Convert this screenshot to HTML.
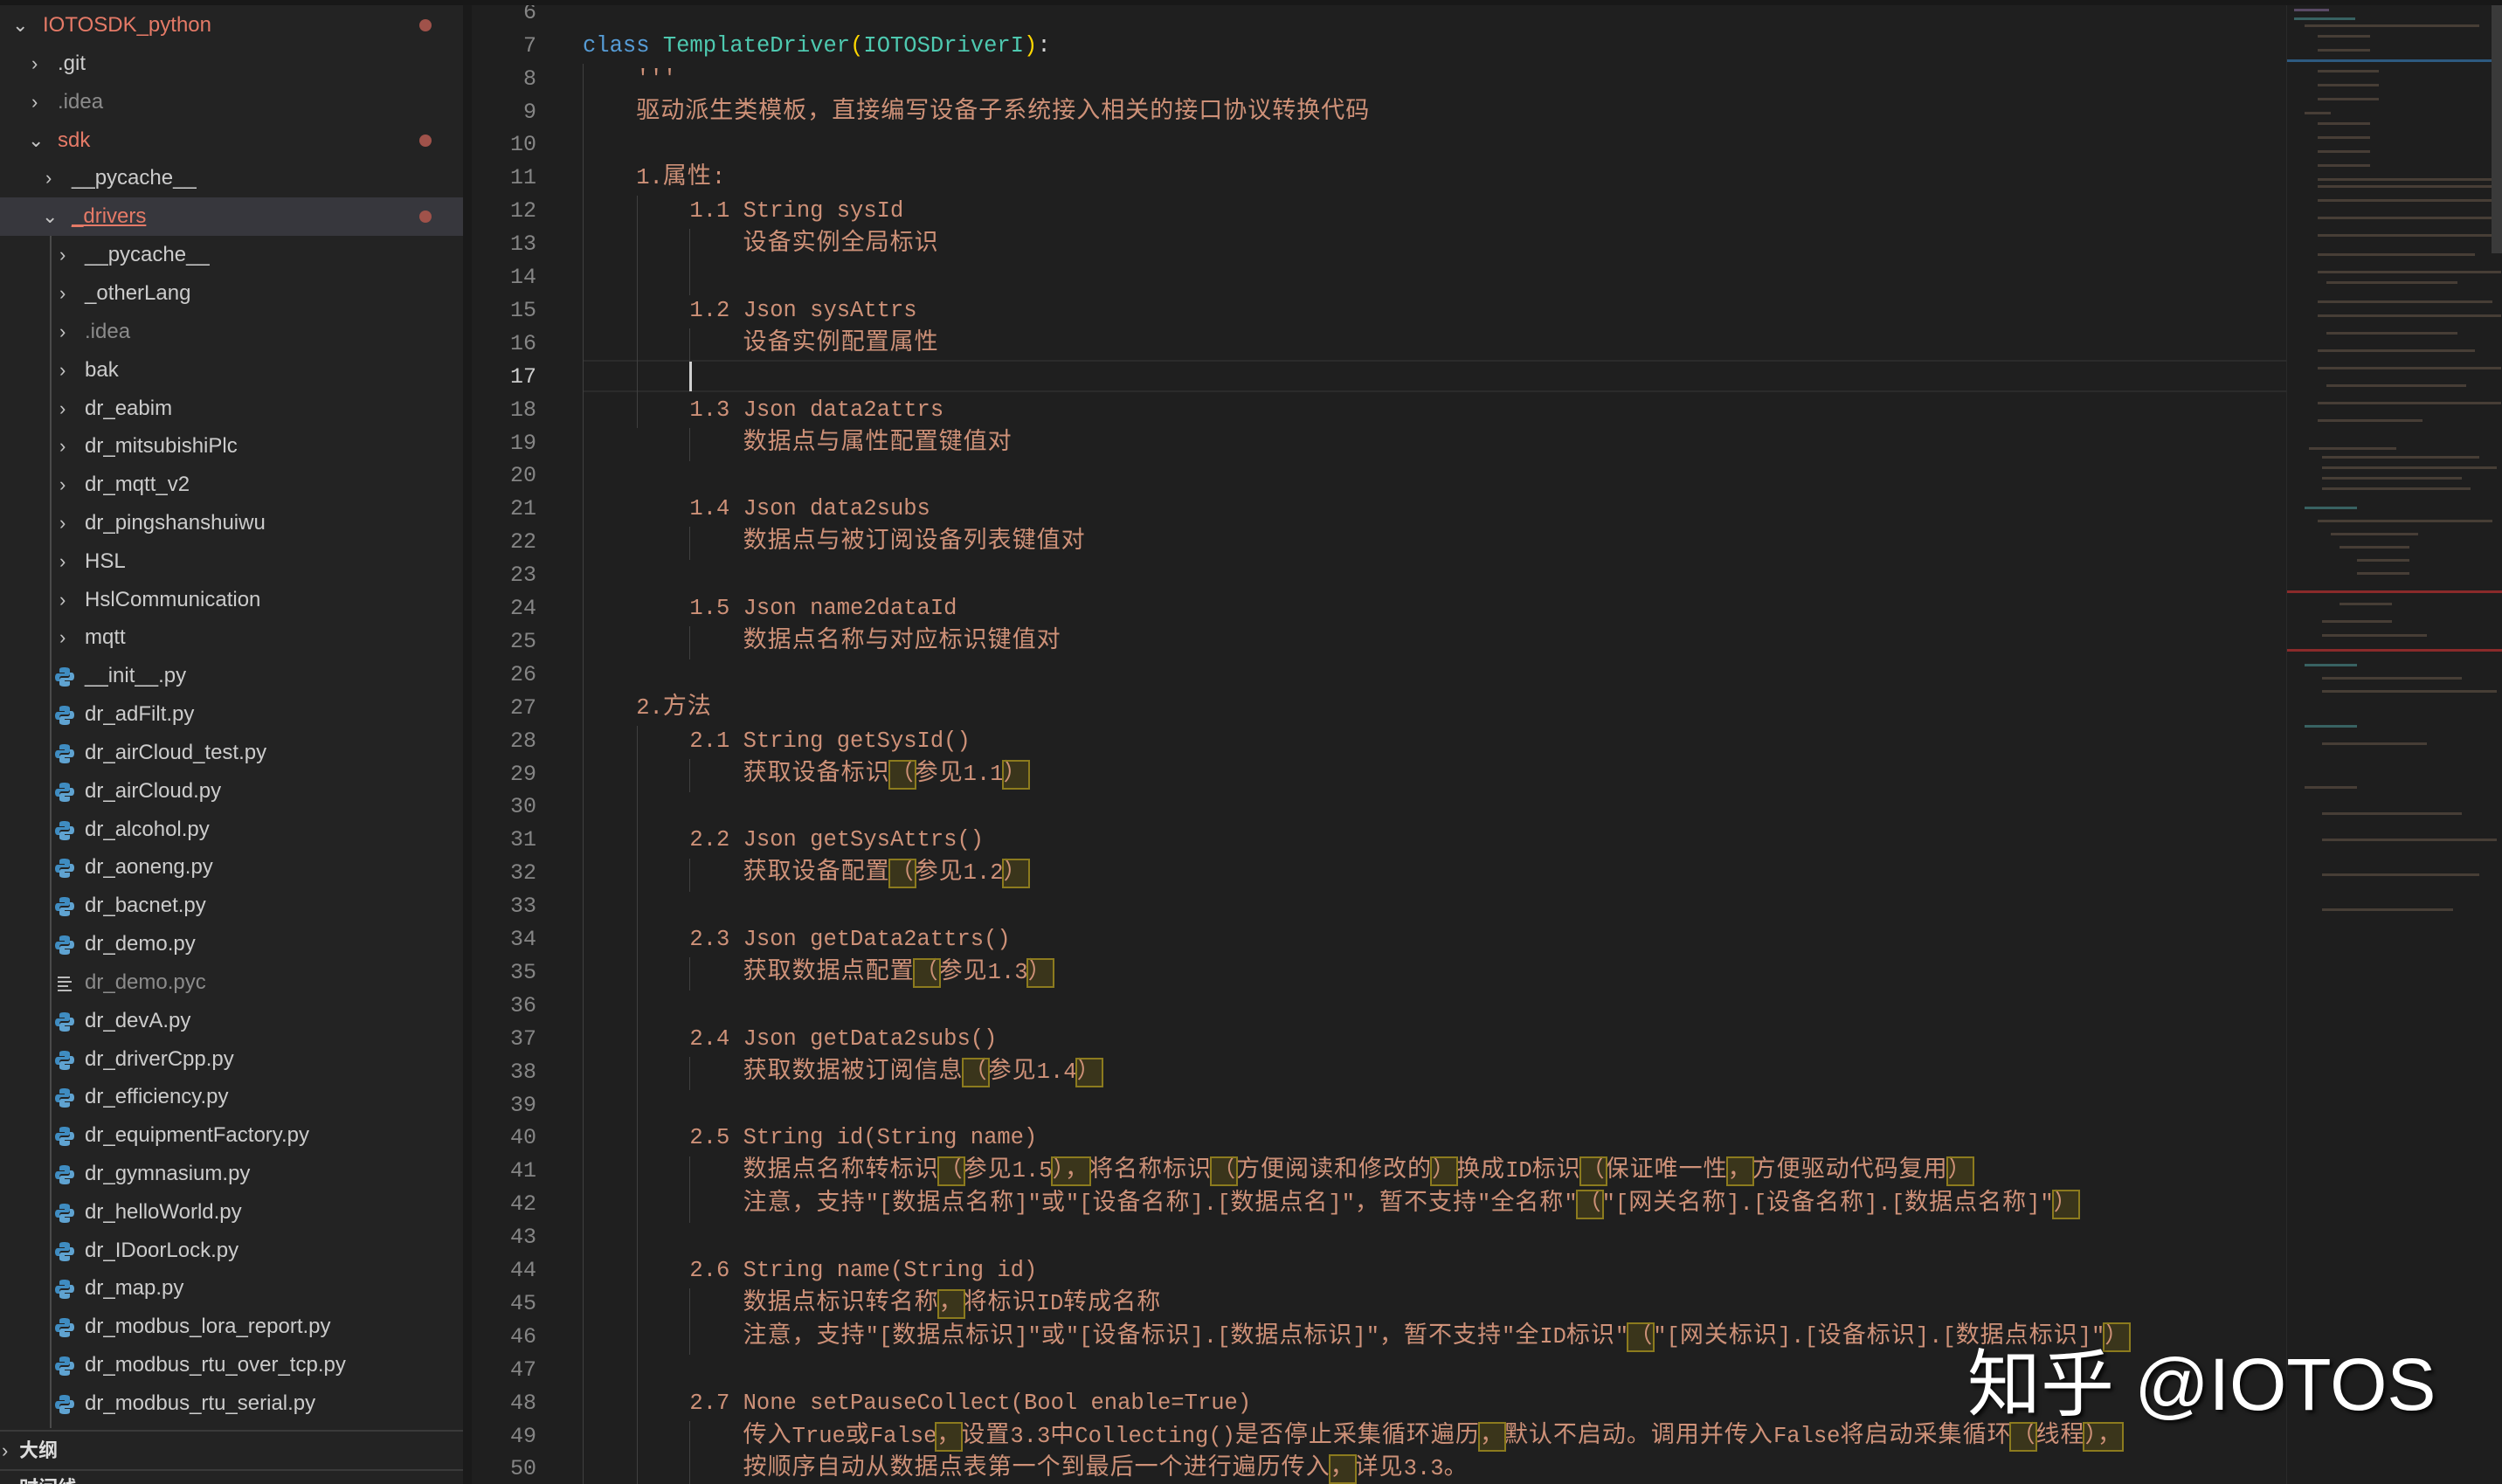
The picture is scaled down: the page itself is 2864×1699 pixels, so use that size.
<!DOCTYPE html>
<html><head><meta charset="utf-8">
<style>
*{margin:0;padding:0;box-sizing:border-box}
html,body{width:2864px;height:1699px;overflow:hidden;background:#1f1f1f}
body{position:relative;font-family:"Liberation Sans","Noto Sans CJK SC",sans-serif}
#side{position:absolute;left:0;top:0;width:530px;height:1699px;background:#232323}
.r{position:absolute;left:0;width:530px;height:44px;line-height:44px;font-size:24px;color:#cccccc;white-space:nowrap}
.r .c{position:absolute;top:0;font-size:22px;color:#c5c5c5}
.r .t{position:absolute;top:0}
.red{color:#e57a67!important}
.dim{color:#8b8b8b!important}
.dot{position:absolute;left:480px;top:15px;width:14px;height:14px;border-radius:7px;background:#a0524a}
.sel{background:#37373d}
.ic{position:absolute;left:62px;top:11px}
#ed{position:absolute;left:530px;top:0;width:2087px;height:1699px;background:#1f1f1f;overflow:hidden}
.ln{position:absolute;left:0;width:84px;text-align:right;height:38px;line-height:38px;font-family:"Liberation Mono",monospace;font-size:25px;color:#858585}
.cl{position:absolute;left:137px;height:38px;line-height:38px;font-family:"Liberation Mono","Noto Sans CJK SC",monospace;font-size:25.5px;color:#ce9178;white-space:pre}
.cl i{font-style:normal;font-size:27px;letter-spacing:1px}
.g{position:absolute;width:1px;background:#404040}
.b{outline:2px solid #8c7b1e;background:rgba(110,95,20,.35)}
.kw{color:#569cd6}.ty{color:#4ec9b0}.br{color:#ffd700}.wh{color:#d4d4d4}
#mm{position:absolute;left:2617px;top:0;width:247px;height:1699px;background:#1e1e1e;border-left:1px solid #2a2a2a;overflow:hidden}
.m{position:absolute;height:3px;background:#6a5a4a;opacity:.55}
#wm{position:absolute;left:2252px;top:1518px;font-size:84px;color:#fff;font-family:"Liberation Sans","Noto Sans CJK SC",sans-serif;text-shadow:3px 3px 4px rgba(0,0,0,.8);white-space:nowrap}
</style></head><body>
<div style="position:absolute;left:0;top:0;width:2864px;height:6px;background:#181818;z-index:5"></div>
<div id="side">
<svg width="0" height="0" style="position:absolute"><defs><g id="py"><path d="M11 1c-5 0-5 2-5 3v3h6v1H4C2 8 1 10 1 12.5S2 17 4 17h2v-3c0-2 1-3 3-3h6c2 0 3-1 3-3V4c0-2-2-3-7-3z" fill="#3f8cc1"/><path d="M13 23c5 0 5-2 5-3v-3h-6v-1h8c2 0 3-2 3-4.5S22 7 20 7h-2v3c0 2-1 3-3 3H9c-2 0-3 1-3 3v4c0 2 2 3 7 3z" fill="#5fa3d1"/></g></defs></svg>
<div class="r" style="top:7px"><span class="c" style="left:14px">⌄</span><span class="t red" style="left:49px">IOTOSDK_python</span><span class="dot"></span></div>
<div class="r" style="top:51px"><span class="c" style="left:36px">›</span><span class="t" style="left:66px">.git</span></div>
<div class="r" style="top:95px"><span class="c" style="left:36px">›</span><span class="t dim" style="left:66px">.idea</span></div>
<div class="r" style="top:139px"><span class="c" style="left:32px">⌄</span><span class="t red" style="left:66px">sdk</span><span class="dot"></span></div>
<div class="r" style="top:182px"><span class="c" style="left:52px">›</span><span class="t" style="left:82px">__pycache__</span></div>
<div class="r sel" style="top:226px"><span class="c" style="left:48px">⌄</span><span class="t red" style="left:82px;text-decoration:underline">_drivers</span><span class="dot"></span></div>
<div style="position:absolute;left:57px;top:270px;width:2px;height:1365px;background:#4a4a4a"></div>
<div class="r" style="top:270px"><span class="c" style="left:68px">›</span><span class="t" style="left:97px">__pycache__</span></div>
<div class="r" style="top:314px"><span class="c" style="left:68px">›</span><span class="t" style="left:97px">_otherLang</span></div>
<div class="r" style="top:358px"><span class="c" style="left:68px">›</span><span class="t dim" style="left:97px">.idea</span></div>
<div class="r" style="top:402px"><span class="c" style="left:68px">›</span><span class="t" style="left:97px">bak</span></div>
<div class="r" style="top:446px"><span class="c" style="left:68px">›</span><span class="t" style="left:97px">dr_eabim</span></div>
<div class="r" style="top:489px"><span class="c" style="left:68px">›</span><span class="t" style="left:97px">dr_mitsubishiPlc</span></div>
<div class="r" style="top:533px"><span class="c" style="left:68px">›</span><span class="t" style="left:97px">dr_mqtt_v2</span></div>
<div class="r" style="top:577px"><span class="c" style="left:68px">›</span><span class="t" style="left:97px">dr_pingshanshuiwu</span></div>
<div class="r" style="top:621px"><span class="c" style="left:68px">›</span><span class="t" style="left:97px">HSL</span></div>
<div class="r" style="top:665px"><span class="c" style="left:68px">›</span><span class="t" style="left:97px">HslCommunication</span></div>
<div class="r" style="top:708px"><span class="c" style="left:68px">›</span><span class="t" style="left:97px">mqtt</span></div>
<div class="r" style="top:752px"><svg class="ic" width="24" height="24"><use href="#py"/></svg><span class="t" style="left:97px">__init__.py</span></div>
<div class="r" style="top:796px"><svg class="ic" width="24" height="24"><use href="#py"/></svg><span class="t" style="left:97px">dr_adFilt.py</span></div>
<div class="r" style="top:840px"><svg class="ic" width="24" height="24"><use href="#py"/></svg><span class="t" style="left:97px">dr_airCloud_test.py</span></div>
<div class="r" style="top:884px"><svg class="ic" width="24" height="24"><use href="#py"/></svg><span class="t" style="left:97px">dr_airCloud.py</span></div>
<div class="r" style="top:928px"><svg class="ic" width="24" height="24"><use href="#py"/></svg><span class="t" style="left:97px">dr_alcohol.py</span></div>
<div class="r" style="top:971px"><svg class="ic" width="24" height="24"><use href="#py"/></svg><span class="t" style="left:97px">dr_aoneng.py</span></div>
<div class="r" style="top:1015px"><svg class="ic" width="24" height="24"><use href="#py"/></svg><span class="t" style="left:97px">dr_bacnet.py</span></div>
<div class="r" style="top:1059px"><svg class="ic" width="24" height="24"><use href="#py"/></svg><span class="t" style="left:97px">dr_demo.py</span></div>
<div class="r" style="top:1103px"><svg class="ic" width="24" height="24"><path d="M4 5h14M4 10h16M4 15h12M4 20h16" stroke="#bbb" stroke-width="2"/></svg><span class="t dim" style="left:97px">dr_demo.pyc</span></div>
<div class="r" style="top:1147px"><svg class="ic" width="24" height="24"><use href="#py"/></svg><span class="t" style="left:97px">dr_devA.py</span></div>
<div class="r" style="top:1191px"><svg class="ic" width="24" height="24"><use href="#py"/></svg><span class="t" style="left:97px">dr_driverCpp.py</span></div>
<div class="r" style="top:1234px"><svg class="ic" width="24" height="24"><use href="#py"/></svg><span class="t" style="left:97px">dr_efficiency.py</span></div>
<div class="r" style="top:1278px"><svg class="ic" width="24" height="24"><use href="#py"/></svg><span class="t" style="left:97px">dr_equipmentFactory.py</span></div>
<div class="r" style="top:1322px"><svg class="ic" width="24" height="24"><use href="#py"/></svg><span class="t" style="left:97px">dr_gymnasium.py</span></div>
<div class="r" style="top:1366px"><svg class="ic" width="24" height="24"><use href="#py"/></svg><span class="t" style="left:97px">dr_helloWorld.py</span></div>
<div class="r" style="top:1410px"><svg class="ic" width="24" height="24"><use href="#py"/></svg><span class="t" style="left:97px">dr_IDoorLock.py</span></div>
<div class="r" style="top:1453px"><svg class="ic" width="24" height="24"><use href="#py"/></svg><span class="t" style="left:97px">dr_map.py</span></div>
<div class="r" style="top:1497px"><svg class="ic" width="24" height="24"><use href="#py"/></svg><span class="t" style="left:97px">dr_modbus_lora_report.py</span></div>
<div class="r" style="top:1541px"><svg class="ic" width="24" height="24"><use href="#py"/></svg><span class="t" style="left:97px">dr_modbus_rtu_over_tcp.py</span></div>
<div class="r" style="top:1585px"><svg class="ic" width="24" height="24"><use href="#py"/></svg><span class="t" style="left:97px">dr_modbus_rtu_serial.py</span></div>
<div style="position:absolute;left:0;top:1637px;width:530px;height:2px;background:#3a3a3a"></div>
<div class="r" style="top:1641px;height:40px;line-height:40px"><span class="c" style="left:2px">›</span><span class="t" style="left:22px;font-weight:bold;font-size:22px;color:#ddd">大纲</span></div>
<div style="position:absolute;left:0;top:1682px;width:530px;height:2px;background:#3a3a3a"></div>
<div class="r" style="top:1684px;height:40px;line-height:40px"><span class="c" style="left:2px">›</span><span class="t" style="left:22px;font-weight:bold;font-size:22px;color:#ddd">时间线</span></div>
</div>

<div id="ed">
<div style="position:absolute;left:0;top:0;width:10px;height:1699px;background:#1a1a1a"></div>
<div style="position:absolute;left:137px;top:412px;width:1950px;height:37px;border-top:2px solid #2b2b2b;border-bottom:2px solid #2b2b2b"></div>
<div class="g" style="left:137px;top:73px;height:1630px"></div>
<div class="g" style="left:199px;top:224px;height:266px"></div>
<div class="g" style="left:199px;top:831px;height:870px"></div>
<div class="g" style="left:259px;top:262px;height:76px"></div>
<div class="g" style="left:259px;top:376px;height:38px"></div>
<div class="g" style="left:259px;top:490px;height:38px"></div>
<div class="g" style="left:259px;top:603px;height:38px"></div>
<div class="g" style="left:259px;top:717px;height:38px"></div>
<div class="g" style="left:259px;top:869px;height:38px"></div>
<div class="g" style="left:259px;top:983px;height:38px"></div>
<div class="g" style="left:259px;top:1096px;height:38px"></div>
<div class="g" style="left:259px;top:1210px;height:38px"></div>
<div class="g" style="left:259px;top:1324px;height:76px"></div>
<div class="g" style="left:259px;top:1475px;height:76px"></div>
<div class="g" style="left:259px;top:1627px;height:76px"></div>
<div style="position:absolute;left:259px;top:414px;width:3px;height:34px;background:#d0d0d0"></div>

<div class="ln" style="top:-4px">6</div>
<div class="ln" style="top:34px">7</div>
<div class="ln" style="top:72px">8</div>
<div class="ln" style="top:110px">9</div>
<div class="ln" style="top:147px">10</div>
<div class="ln" style="top:185px">11</div>
<div class="ln" style="top:223px">12</div>
<div class="ln" style="top:261px">13</div>
<div class="ln" style="top:299px">14</div>
<div class="ln" style="top:337px">15</div>
<div class="ln" style="top:375px">16</div>
<div class="ln" style="top:413px;color:#cccccc">17</div>
<div class="ln" style="top:451px">18</div>
<div class="ln" style="top:489px">19</div>
<div class="ln" style="top:526px">20</div>
<div class="ln" style="top:564px">21</div>
<div class="ln" style="top:602px">22</div>
<div class="ln" style="top:640px">23</div>
<div class="ln" style="top:678px">24</div>
<div class="ln" style="top:716px">25</div>
<div class="ln" style="top:754px">26</div>
<div class="ln" style="top:792px">27</div>
<div class="ln" style="top:830px">28</div>
<div class="ln" style="top:868px">29</div>
<div class="ln" style="top:905px">30</div>
<div class="ln" style="top:943px">31</div>
<div class="ln" style="top:981px">32</div>
<div class="ln" style="top:1019px">33</div>
<div class="ln" style="top:1057px">34</div>
<div class="ln" style="top:1095px">35</div>
<div class="ln" style="top:1133px">36</div>
<div class="ln" style="top:1171px">37</div>
<div class="ln" style="top:1209px">38</div>
<div class="ln" style="top:1247px">39</div>
<div class="ln" style="top:1284px">40</div>
<div class="ln" style="top:1322px">41</div>
<div class="ln" style="top:1360px">42</div>
<div class="ln" style="top:1398px">43</div>
<div class="ln" style="top:1436px">44</div>
<div class="ln" style="top:1474px">45</div>
<div class="ln" style="top:1512px">46</div>
<div class="ln" style="top:1550px">47</div>
<div class="ln" style="top:1588px">48</div>
<div class="ln" style="top:1626px">49</div>
<div class="ln" style="top:1663px">50</div>

<div class="cl" style="top:34px"><span class="kw">class</span> <span class="ty">TemplateDriver</span><span class="br">(</span><span class="ty">IOTOSDriverI</span><span class="br">)</span><span class="wh">:</span></div>
<div class="cl" style="top:72px">    '''</div>
<div class="cl" style="top:110px">    <i>驱动派生类模板，直接编写设备子系统接入相关的接口协议转换代码</i></div>
<div class="cl" style="top:185px">    1.<i>属性</i>:</div>
<div class="cl" style="top:223px">        1.1 String sysId</div>
<div class="cl" style="top:261px">            <i>设备实例全局标识</i></div>
<div class="cl" style="top:337px">        1.2 Json sysAttrs</div>
<div class="cl" style="top:375px">            <i>设备实例配置属性</i></div>
<div class="cl" style="top:451px">        1.3 Json data2attrs</div>
<div class="cl" style="top:489px">            <i>数据点与属性配置键值对</i></div>
<div class="cl" style="top:564px">        1.4 Json data2subs</div>
<div class="cl" style="top:602px">            <i>数据点与被订阅设备列表键值对</i></div>
<div class="cl" style="top:678px">        1.5 Json name2dataId</div>
<div class="cl" style="top:716px">            <i>数据点名称与对应标识键值对</i></div>
<div class="cl" style="top:792px">    2.<i>方法</i></div>
<div class="cl" style="top:830px">        2.1 String getSysId()</div>
<div class="cl" style="top:868px">            <i>获取设备标识<span class="b">（</span>参见</i>1.1<i class="b">）</i></div>
<div class="cl" style="top:943px">        2.2 Json getSysAttrs()</div>
<div class="cl" style="top:981px">            <i>获取设备配置<span class="b">（</span>参见</i>1.2<i class="b">）</i></div>
<div class="cl" style="top:1057px">        2.3 Json getData2attrs()</div>
<div class="cl" style="top:1095px">            <i>获取数据点配置<span class="b">（</span>参见</i>1.3<i class="b">）</i></div>
<div class="cl" style="top:1171px">        2.4 Json getData2subs()</div>
<div class="cl" style="top:1209px">            <i>获取数据被订阅信息<span class="b">（</span>参见</i>1.4<i class="b">）</i></div>
<div class="cl" style="top:1284px">        2.5 String id(String name)</div>
<div class="cl" style="top:1322px">            <i>数据点名称转标识<span class="b">（</span>参见</i>1.5<i><span class="b">），</span>将名称标识<span class="b">（</span>方便阅读和修改的<span class="b">）</span>换成</i>ID<i>标识<span class="b">（</span>保证唯一性<span class="b">，</span>方便驱动代码复用<span class="b">）</span></i></div>
<div class="cl" style="top:1360px">            <i>注意，支持</i>"[<i>数据点名称</i>]"<i>或</i>"[<i>设备名称</i>].[<i>数据点名</i>]"<i>，暂不支持</i>"<i>全名称</i>"<i class="b">（</i>"[<i>网关名称</i>].[<i>设备名称</i>].[<i>数据点名称</i>]"<i class="b">）</i></div>
<div class="cl" style="top:1436px">        2.6 String name(String id)</div>
<div class="cl" style="top:1474px">            <i>数据点标识转名称<span class="b">，</span>将标识</i>ID<i>转成名称</i></div>
<div class="cl" style="top:1512px">            <i>注意，支持</i>"[<i>数据点标识</i>]"<i>或</i>"[<i>设备标识</i>].[<i>数据点标识</i>]"<i>，暂不支持</i>"<i>全</i>ID<i>标识</i>"<i class="b">（</i>"[<i>网关标识</i>].[<i>设备标识</i>].[<i>数据点标识</i>]"<i class="b">）</i></div>
<div class="cl" style="top:1588px">        2.7 None setPauseCollect(Bool enable=True)</div>
<div class="cl" style="top:1626px">            <i>传入</i>True<i>或</i>False<i><span class="b">，</span>设置</i>3.3<i>中</i>Collecting()<i>是否停止采集循环遍历<span class="b">，</span>默认不启动。调用并传入</i>False<i>将启动采集循环<span class="b">（</span>线程<span class="b">），</span></i></div>
<div class="cl" style="top:1663px">            <i>按顺序自动从数据点表第一个到最后一个进行遍历传入<span class="b">，</span>详见</i>3.3<i>。</i></div>
</div>

<div id="mm">
<div style="position:absolute;left:0;top:68px;width:247px;height:3px;background:#2d5a80"></div>
<div style="position:absolute;left:0;top:676px;width:247px;height:3px;background:#8a2a2a"></div>
<div style="position:absolute;left:0;top:743px;width:247px;height:3px;background:#8a2a2a"></div>
<div class="m" style="left:8px;top:10px;width:40px;background:#8a70a0"></div>
<div class="m" style="left:8px;top:20px;width:70px;background:#4e9a9a"></div>
<div class="m" style="left:20px;top:28px;width:200px"></div>
<div class="m" style="left:35px;top:40px;width:60px"></div>
<div class="m" style="left:35px;top:56px;width:60px"></div>
<div class="m" style="left:35px;top:80px;width:70px"></div>
<div class="m" style="left:35px;top:96px;width:70px"></div>
<div class="m" style="left:35px;top:112px;width:70px"></div>
<div class="m" style="left:20px;top:128px;width:30px"></div>
<div class="m" style="left:35px;top:140px;width:60px"></div>
<div class="m" style="left:35px;top:156px;width:60px"></div>
<div class="m" style="left:35px;top:172px;width:60px"></div>
<div class="m" style="left:35px;top:188px;width:60px"></div>
<div class="m" style="left:35px;top:204px;width:210px"></div>
<div class="m" style="left:35px;top:212px;width:210px"></div>
<div class="m" style="left:35px;top:228px;width:210px"></div>
<div class="m" style="left:35px;top:248px;width:210px"></div>
<div class="m" style="left:35px;top:268px;width:210px"></div>
<div class="m" style="left:35px;top:290px;width:180px"></div>
<div class="m" style="left:35px;top:310px;width:210px"></div>
<div class="m" style="left:45px;top:322px;width:150px"></div>
<div class="m" style="left:35px;top:344px;width:200px"></div>
<div class="m" style="left:35px;top:360px;width:210px"></div>
<div class="m" style="left:45px;top:380px;width:150px"></div>
<div class="m" style="left:35px;top:400px;width:180px"></div>
<div class="m" style="left:35px;top:420px;width:210px"></div>
<div class="m" style="left:45px;top:440px;width:160px"></div>
<div class="m" style="left:35px;top:460px;width:210px"></div>
<div class="m" style="left:35px;top:480px;width:120px"></div>
<div class="m" style="left:25px;top:512px;width:100px"></div>
<div class="m" style="left:40px;top:522px;width:180px"></div>
<div class="m" style="left:40px;top:534px;width:200px"></div>
<div class="m" style="left:40px;top:546px;width:160px"></div>
<div class="m" style="left:40px;top:558px;width:170px"></div>
<div class="m" style="left:20px;top:580px;width:60px;background:#4e9a9a"></div>
<div class="m" style="left:35px;top:595px;width:200px"></div>
<div class="m" style="left:50px;top:610px;width:100px"></div>
<div class="m" style="left:60px;top:625px;width:80px"></div>
<div class="m" style="left:80px;top:640px;width:60px"></div>
<div class="m" style="left:80px;top:655px;width:60px"></div>
<div class="m" style="left:60px;top:690px;width:60px"></div>
<div class="m" style="left:40px;top:710px;width:80px"></div>
<div class="m" style="left:40px;top:726px;width:120px"></div>
<div class="m" style="left:20px;top:760px;width:60px;background:#4e9a9a"></div>
<div class="m" style="left:40px;top:775px;width:160px"></div>
<div class="m" style="left:40px;top:790px;width:200px"></div>
<div class="m" style="left:20px;top:830px;width:60px;background:#4e9a9a"></div>
<div class="m" style="left:40px;top:850px;width:120px"></div>
<div class="m" style="left:20px;top:900px;width:60px"></div>
<div class="m" style="left:40px;top:930px;width:160px"></div>
<div class="m" style="left:40px;top:960px;width:200px"></div>
<div class="m" style="left:40px;top:1000px;width:180px"></div>
<div class="m" style="left:40px;top:1040px;width:150px"></div>
</div>
<div style="position:absolute;left:2852px;top:0;width:12px;height:290px;background:#3a3a3a"></div>

<div id="wm">知乎 @IOTOS</div>
</body></html>
